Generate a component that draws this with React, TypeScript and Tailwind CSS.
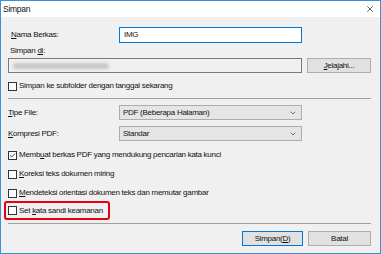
import { Check, ChevronDown, X } from "lucide-react";

function CheckBox({ checked }: { checked?: boolean }) {
    return (
        <span className="w-[9px] h-[9px] border border-[#333] bg-white flex items-center justify-center shrink-0">
            {checked && <Check size={9} strokeWidth={3} className="text-[#222]" />}
        </span>
    );
}

function Option({ label, checked }: { label: React.ReactNode; checked?: boolean }) {
    return (
        <div className="h-[12px] flex items-center gap-[2px] pl-[7px] whitespace-nowrap">
            <CheckBox checked={checked} />
            <span>{label}</span>
        </div>
    );
}

function Select({ value }: { value: string }) {
    return (
        <div className="w-[183px] h-[15px] bg-[#e5e5e5] border border-[#acacac] flex items-center justify-between pl-[3px] pr-[4px]">
            <span>{value}</span>
            <ChevronDown size={8} strokeWidth={2} className="text-[#333]" />
        </div>
    );
}

export default function App() {
    return (
        <div
            className="w-[381px] h-[254px] border border-[#3d8fd6] flex flex-col text-[8px] tracking-[-0.28px] text-[#111] overflow-hidden whitespace-nowrap"
            style={{ fontFamily: '"Liberation Sans", Arial, sans-serif' }}
        >
            <div className="h-[16px] bg-white flex items-center justify-between pl-[2px] pr-[5px] shrink-0">
                <span className="text-[8.5px]">Simpan</span>
                <X size={10} strokeWidth={1.5} className="text-[#111]" />
            </div>
            <div className="flex-1 bg-[#f0f0f0] flex flex-col px-[7px]">
                <div className="mt-[10px] h-[16px] flex items-center">
                    <span className="w-[111px] pl-[3px]"><u>N</u>ama Berkas:</span>
                    <div className="w-[183px] h-[16px] bg-white border border-[#0078d7] flex items-center pl-[4px]">IMG</div>
                </div>
                <div className="h-[13px] mt-[2px] flex items-end pb-[1px] pl-[2px]">
                    Simpan <u className="ml-[2px]">di</u>:
                </div>
                <div className="h-[15px] flex items-center gap-[5px]">
                    <div className="w-[294px] h-[15px] bg-[#f0f0f0] border border-[#7a7a7a] flex items-center pl-[4px]">
                        <div className="w-[96px] h-[6px] bg-[#c8c8c8] rounded-full blur-[1.5px]" />
                    </div>
                    <div className="w-[64px] h-[15px] bg-[#e1e1e1] border border-[#adadad] flex items-center justify-center">
                        <span><u>J</u>elajahi...</span>
                    </div>
                </div>
                <div className="mt-[7px] -ml-[7px]">
                    <Option label="Simpan ke subfolder dengan tanggal sekarang" />
                </div>
                <div className="mt-[6px] h-px bg-[#a0a0a0] mr-[2px]" />
                <div className="mt-[6px] h-[15px] flex items-center">
                    <span className="w-[111px]"><u>T</u>ipe File:</span>
                    <Select value="PDF (Beberapa Halaman)" />
                </div>
                <div className="mt-[6px] h-[15px] flex items-center">
                    <span className="w-[111px]"><u>K</u>ompresi PDF:</span>
                    <Select value="Standar" />
                </div>
                <div className="-ml-[7px] flex flex-col">
                    <div className="mt-[8px]">
                        <Option checked label={<>Memb<u>u</u>at berkas PDF yang mendukung pencarian kata kunci</>} />
                    </div>
                    <div className="mt-[7px]">
                        <Option label={<><u>K</u>oreksi teks dokumen miring</>} />
                    </div>
                    <div className="mt-[7px]">
                        <Option label={<><u>M</u>endeteksi orientasi dokumen teks dan memutar gambar</>} />
                    </div>
                    <div className="mt-[2px] ml-[3px] w-[106px] h-[19px] border-2 border-[#e60012] rounded-[3px] flex items-center">
                        <div className="-ml-[5px]">
                            <Option label={<>Set <u>k</u>ata sandi keamanan</>} />
                        </div>
                    </div>
                </div>
                <div className="mt-[3px] h-px bg-[#a0a0a0] mr-[2px]" />
                <div className="mt-[7px] flex justify-end gap-[5px] mr-[2px]">
                    <div className="w-[61px] h-[15px] bg-[#e1e1e1] border border-[#0078d7] flex items-center justify-center">
                        <span>Simpan(<u>D</u>)</span>
                    </div>
                    <div className="w-[63px] h-[15px] bg-[#e1e1e1] border border-[#adadad] flex items-center justify-center">
                        <span>Batal</span>
                    </div>
                </div>
            </div>
        </div>
    );
}
